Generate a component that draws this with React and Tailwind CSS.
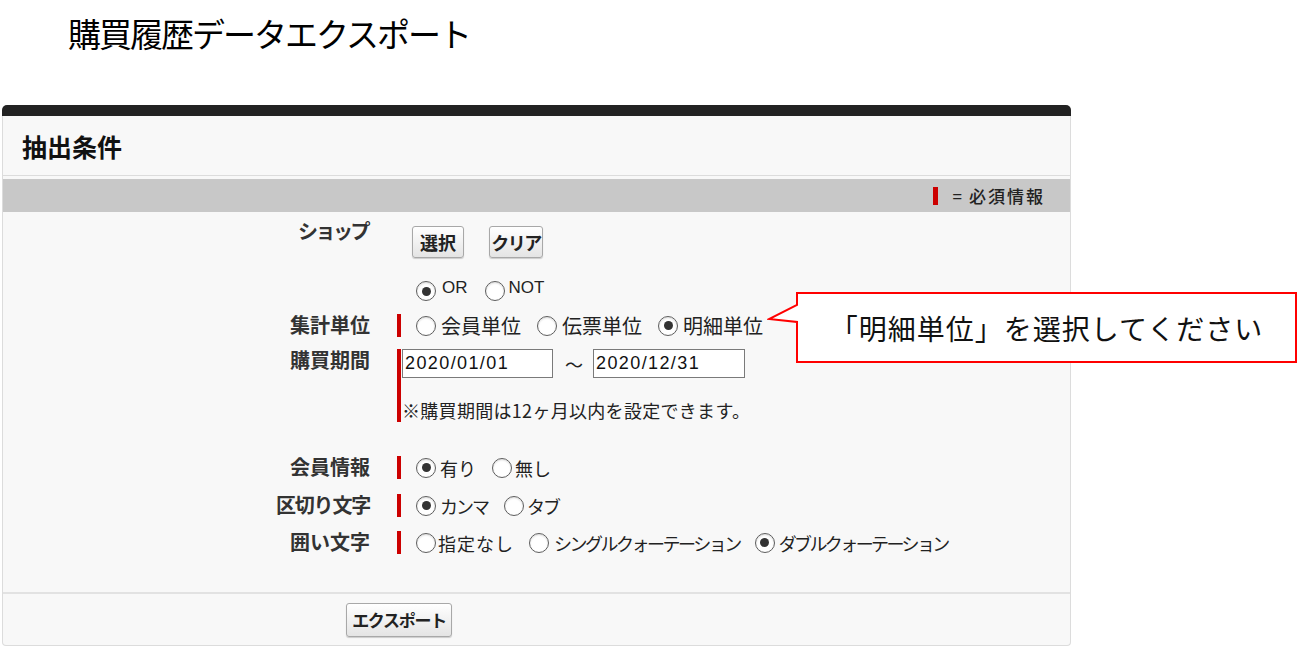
import React from "react";

function Radio({ checked, label, gap = "ml-[5px]", className = "", textClass = "" }) {
  return (
    <span className={"flex items-center " + className}>
      <span className="w-[20px] h-[20px] shrink-0 rounded-full border border-[#5e5e5e] bg-white flex items-center justify-center shadow-[inset_0_1px_2px_rgba(0,0,0,0.15)]">
        {checked && <span className="w-[9px] h-[9px] rounded-full bg-[#333]" />}
      </span>
      <span className={gap + " whitespace-nowrap " + textClass}>{label}</span>
    </span>
  );
}

function Btn({ children, className = "" }) {
  return (
    <button
      type="button"
      className={
        "border border-[#a8a8a8] rounded-[3px] bg-linear-to-b from-white to-[#e4e4e4] shadow-[0_1px_1px_rgba(0,0,0,0.18)] font-bold text-[#222] flex items-center justify-center " +
        className
      }
    >
      {children}
    </button>
  );
}

function Label({ children, className = "" }) {
  return (
    <div className={"w-[367px] shrink-0 text-right font-bold text-[20px] leading-[22px] text-[#333] whitespace-nowrap " + className}>
      {children}
    </div>
  );
}

export default function App() {
  return (
    <div className="relative bg-white min-h-[656px] font-['Noto_Sans_CJK_JP',sans-serif] text-[#222]">
      <h1 className="pl-[68px] pt-[16px] text-[33px] leading-[35px] tracking-[-2px] font-normal text-black">
        購買履歴データエクスポート
      </h1>

      <div className="mt-[54px] ml-[2px] w-[1069px]">
        <div className="h-[11px] bg-[#222] rounded-t-[5px]" />
        <div className="border-x border-b border-[#dcdcdc] rounded-b-[4px] bg-[#f8f8f8]">
          {/* header */}
          <div className="h-[60px] flex items-center pl-[19px] border-b border-[#dcdcdc]">
            <h2 className="text-[25px] leading-[28px] font-bold text-[#111]">抽出条件</h2>
          </div>
          <div className="mt-[3px] h-[33px] bg-[#c8c8c8] flex items-center justify-end pr-[25px]">
            <span className="w-[5px] h-[18px] bg-[#cc0000] mr-[15px]" />
            <span className="text-[17px] leading-[20px]">=</span>
            <span className="ml-[7px] text-[17px] leading-[20px] tracking-[2px] font-medium">必須情報</span>
          </div>

          {/* form */}
          <div className="pt-[8px] pb-[38px]">
            {/* shop */}
            <div className="flex items-start">
              <Label className="text-[17px] tracking-[-2.5px] pr-[2px]">ショップ</Label>
              <div className="ml-[27px] pl-[15px] pt-[6px] flex">
                <Btn className="w-[52px] h-[32px] text-[18px]">選択</Btn>
                <Btn className="ml-[25px] w-[54px] h-[32px] text-[18px] tracking-[-1.5px]">クリア</Btn>
              </div>
            </div>
            <div className="flex mt-[22px] h-[22px]">
              <div className="w-[367px] shrink-0" />
              <div className="ml-[27px] pl-[19px] flex items-center font-['Liberation_Sans',Arial,sans-serif] text-[17px]">
                <Radio checked label="OR" gap="ml-[6px]" textClass="-mt-[6px]" />
                <Radio label="NOT" gap="ml-[4px]" className="ml-[17px]" textClass="-mt-[6px]" />
              </div>
            </div>

            {/* 集計単位 */}
            <div className="flex items-start mt-[12px]">
              <Label>集計単位</Label>
              <div className="ml-[27px] h-[23px] border-l-4 border-[#cc0000] pl-[15px] flex items-center text-[20px] leading-[22px]">
                <Radio label="会員単位" />
                <Radio label="伝票単位" className="ml-[16px]" />
                <Radio checked label="明細単位" className="ml-[16px]" />
              </div>
            </div>

            {/* 購買期間 */}
            <div className="flex items-start mt-[12px]">
              <Label>購買期間</Label>
              <div className="ml-[27px] border-l-4 border-[#cc0000] pl-[1px] pb-[1px]">
                <div className="flex items-center">
                  <div className="w-[151px] h-[29px] border border-[#7a7a7a] bg-white flex items-center pl-[2px] font-['Liberation_Sans',Arial,sans-serif] text-[18px] tracking-[1.4px] text-[#111]">
                    2020/01/01
                  </div>
                  <span className="ml-[12px] mr-[10px] w-[18px] text-[18px] leading-[20px]">〜</span>
                  <div className="w-[152px] h-[29px] border border-[#7a7a7a] bg-white flex items-center pl-[2px] font-['Liberation_Sans',Arial,sans-serif] text-[18px] tracking-[1.4px] text-[#111]">
                    2020/12/31
                  </div>
                </div>
                <p className="mt-[21px] text-[18px] leading-[22px] tracking-[0.3px] whitespace-nowrap">
                  ※購買期間は12ヶ月以内を設定できます。
                </p>
              </div>
            </div>

            {/* 会員情報 */}
            <div className="flex items-start mt-[34px]">
              <Label>会員情報</Label>
              <div className="ml-[27px] h-[23px] border-l-4 border-[#cc0000] pl-[15px] flex items-center text-[18px] leading-[22px]">
                <Radio checked label="有り" gap="ml-[4px]" />
                <Radio label="無し" className="ml-[16px]" gap="ml-[3px]" />
              </div>
            </div>

            {/* 区切り文字 */}
            <div className="flex items-start mt-[15px]">
              <Label className="tracking-[-1.2px]">区切り文字</Label>
              <div className="ml-[27px] h-[23px] border-l-4 border-[#cc0000] pl-[15px] flex items-center text-[18px] leading-[22px]">
                <Radio checked label="カンマ" gap="ml-[4px]" textClass="tracking-[-2px]" />
                <Radio label="タブ" className="ml-[16px]" gap="ml-[3px]" textClass="tracking-[-2px]" />
              </div>
            </div>

            {/* 囲い文字 */}
            <div className="flex items-start mt-[14px]">
              <Label>囲い文字</Label>
              <div className="ml-[27px] h-[23px] border-l-4 border-[#cc0000] pl-[15px] flex items-center text-[18px] leading-[22px]">
                <Radio label="指定なし" gap="ml-[2px]" textClass="tracking-[1px]" />
                <Radio label="シングルクォーテーション" className="ml-[15px]" gap="ml-[5px]" textClass="tracking-[-2.5px]" />
                <Radio checked label="ダブルクォーテーション" className="ml-[15px]" gap="ml-[4px]" textClass="tracking-[-2.6px]" />
              </div>
            </div>
          </div>

          {/* footer */}
          <div className="border-t-2 border-[#e2e2e2] pt-[9px] pb-[8px] pl-[343px]">
            <Btn className="w-[106px] h-[34px] text-[17px] tracking-[-1.3px]">エクスポート</Btn>
          </div>
        </div>
      </div>

      {/* callout */}
      <div className="absolute left-[767px] top-[291px] w-[531px] h-[73px]">
        <svg width="531" height="73" viewBox="0 0 531 73" className="absolute inset-0">
          <path d="M30 2 H529 V71 H30 V31 L2 28 L30 14 Z" fill="white" stroke="#ff0000" strokeWidth="2" strokeLinejoin="miter" />
        </svg>
        <div className="absolute left-[30px] right-[2px] top-[2px] bottom-[2px] flex items-center justify-center">
          <span className="text-[28px] leading-[32px] tracking-[1px] text-[#111] whitespace-nowrap">「明細単位」を選択してください</span>
        </div>
      </div>
    </div>
  );
}
